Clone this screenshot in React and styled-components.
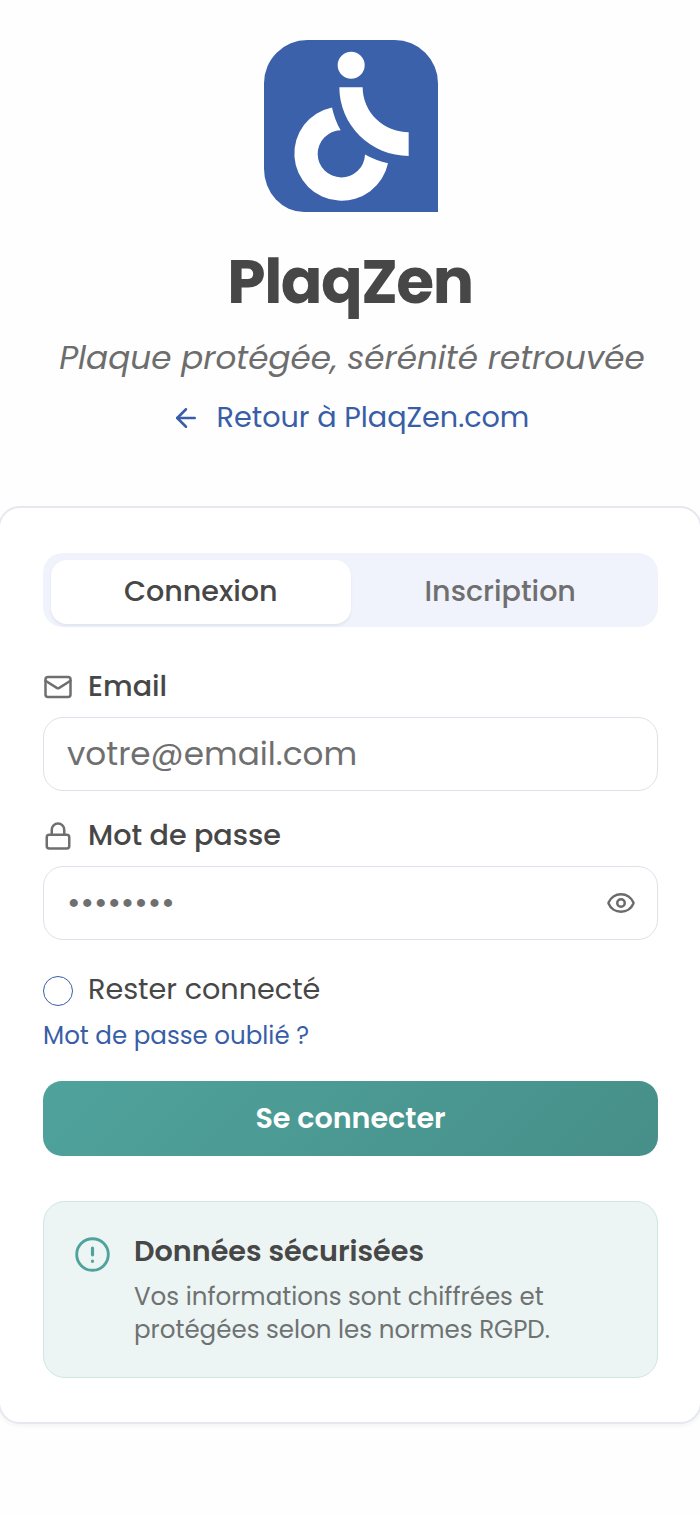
import { useState } from 'react';
import styled, { createGlobalStyle } from 'styled-components';
import { ArrowLeft, Mail, Lock, Eye } from 'lucide-react';

const GlobalStyle = createGlobalStyle`
  *, *::before, *::after {
    box-sizing: border-box;
  }
  body {
    margin: 0;
    background: #fefefe;
    overflow-x: hidden;
  }
  body, input, button {
    font-family: Poppins, Inter, "Liberation Sans", sans-serif;
  }
  h1, h2, p {
    margin: 0;
  }
`;

const Page = styled.div`
  width: 100%;
  min-height: 1515px;
  padding-top: 40px;
  overflow: hidden;
  color: #474747;
`;

const Header = styled.header`
  display: flex;
  flex-direction: column;
  align-items: center;
  padding-left: 2px;
`;

const Title = styled.h1`
  height: 84px;
  margin: 28px 2px 0 0;
  font-size: 61.4px;
  line-height: 84px;
  font-weight: 700;
  letter-spacing: -0.024em;
`;

const Tagline = styled.p`
  height: 50px;
  margin: 9px 0 0 2px;
  font-size: 32.67px;
  line-height: 50px;
  font-style: italic;
  white-space: nowrap;
  color: #6d6d6d;
`;

const BackLink = styled.a`
  display: flex;
  align-items: center;
  gap: 16px;
  height: 44px;
  margin: 12px 2px 0 0;
  font-size: 28.65px;
  white-space: nowrap;
  color: #385ea8;
  text-decoration: none;

  svg {
    margin-top: 2px;
  }
`;

const Card = styled.main`
  height: 918px;
  margin: 67px -2px 0;
  padding: 45px 42px 0 43px;
  border: 2px solid #e5e8ee;
  border-radius: 22px;
  background: #fff;
  box-shadow: 0 2px 4px rgba(30, 40, 80, 0.05);
`;

const Tabs = styled.div`
  display: grid;
  grid-template-columns: 1fr 1fr;
  height: 74px;
  padding: 7px 8px 3px 8px;
  border-radius: 20px;
  background: #f0f3fb;
`;

const Tab = styled.button`
  height: 64px;
  padding: 0 0 2px;
  border: 0;
  border-radius: 16px;
  background: ${({ $active }) => ($active ? '#fff' : 'transparent')};
  box-shadow: ${({ $active }) => ($active ? '0 2px 3px rgba(30, 40, 80, 0.07)' : 'none')};
  color: ${({ $active }) => ($active ? '#474747' : '#6f6f6f')};
  font-size: 28.58px;
  font-weight: 500;
`;

const Form = styled.form`
  display: flex;
  flex-direction: column;
`;

const Field = styled.div`
  margin-top: ${({ $first }) => ($first ? '37px' : '22px')};
`;

const Label = styled.label`
  display: flex;
  align-items: center;
  gap: 15px;
  height: 44px;
  font-size: 28.58px;
  font-weight: 500;

  svg {
    flex: none;
    margin-top: 2px;
    color: #6f6f6f;
  }
`;

const InputBox = styled.div`
  display: flex;
  align-items: center;
  height: 74px;
  margin-top: 9px;
  padding: 0 21px 0 23px;
  border: 1.5px solid #dde1e9;
  border-radius: 20px;
  background: #fff;
`;

const Input = styled.input`
  flex: 1;
  min-width: 0;
  height: 60px;
  padding: 0 0 1px;
  border: 0;
  outline: 0;
  background: transparent;
  font-size: 32.7px;
  color: #474747;

  &::placeholder {
    color: #6f6f6f;
    opacity: 1;
  }
`;

const EyeButton = styled.button`
  display: flex;
  padding: 0;
  border: 0;
  background: none;
  color: #6b6b6b;
`;

const Remember = styled.div`
  display: flex;
  align-items: center;
  gap: 15px;
  height: 44px;
  margin-top: 27px;
  font-size: 28.65px;
`;

const Radio = styled.button`
  width: 30px;
  height: 30px;
  margin-top: 3px;
  padding: 0;
  border: 1.5px solid #385ea8;
  border-radius: 50%;
  background: #fff;
`;

const Forgot = styled.a`
  align-self: flex-start;
  height: 36px;
  margin-top: 7px;
  font-size: 24.55px;
  line-height: 36px;
  color: #385ea8;
  text-decoration: none;
`;

const Submit = styled.button`
  height: 75px;
  margin-top: 27px;
  padding: 0;
  border: 0;
  border-radius: 19px;
  background: linear-gradient(135deg, #4fa39c, #478f89);
  color: #fff;
  font-size: 28.58px;
  font-weight: 600;
`;

const Notice = styled.section`
  display: flex;
  gap: 24px;
  height: 177px;
  margin-top: 45px;
  padding: 31px 30px 0 31px;
  border: 1.5px solid #cfe6e3;
  border-radius: 22px;
  background: #ecf5f4;

  svg {
    flex: none;
    margin-top: 4px;
  }
`;

const NoticeTitle = styled.h2`
  font-size: 28.65px;
  line-height: 36px;
  font-weight: 600;
`;

const NoticeText = styled.p`
  margin-top: 11px;
  font-size: 24.55px;
  line-height: 33px;
  white-space: nowrap;
  color: #6f7272;
`;

const Logo = () => (
  <svg width="174" height="172" viewBox="42 28 522 518" preserveAspectRatio="none">
    <path
      fill="#3a61a9"
      d="M172 28H434A130 130 0 0 1 564 158V546H162A120 130 0 0 1 42 416V158A130 130 0 0 1 172 28Z"
    />
    <circle cx="303.5" cy="104" r="40.5" fill="#fff" />
    <path fill="#fff" d="M268 170H338A138 136 0 0 0 476 306V377A208 207 0 0 1 268 170Z" />
    <path
      fill="#fff"
      d="M246 231A239 239 0 0 0 272 300A71 71 0 1 0 345 373A239 239 0 0 0 414 399A142 142 0 1 1 246 231Z"
    />
  </svg>
);

const AlertIcon = () => (
  <svg width="35" height="35" viewBox="0 0 35 35" fill="none" stroke="#4fa39c">
    <circle cx="17.5" cy="17.5" r="15.8" strokeWidth="2.9" />
    <path d="M17.5 11.2V17.8M17.5 24.2V24.3" strokeWidth="3.2" strokeLinecap="round" />
  </svg>
);

const App = () => {
  const [tab, setTab] = useState('login');
  const [visible, setVisible] = useState(false);

  return (
    <>
      <GlobalStyle />
      <Page>
        <Header>
          <Logo />
          <Title>PlaqZen</Title>
          <Tagline>Plaque protégée, sérénité retrouvée</Tagline>
          <BackLink href="#">
            <ArrowLeft size={30} strokeWidth={2} />
            <span>Retour à PlaqZen.com</span>
          </BackLink>
        </Header>

        <Card>
          <Tabs>
            <Tab type="button" $active={tab === 'login'} onClick={() => setTab('login')}>
              Connexion
            </Tab>
            <Tab type="button" $active={tab === 'signup'} onClick={() => setTab('signup')}>
              Inscription
            </Tab>
          </Tabs>

          <Form onSubmit={(e) => e.preventDefault()}>
            <Field $first>
              <Label htmlFor="email">
                <Mail size={30} strokeWidth={2} />
                Email
              </Label>
              <InputBox>
                <Input id="email" type="email" placeholder="votre@email.com" />
              </InputBox>
            </Field>

            <Field>
              <Label htmlFor="password">
                <Lock size={30} strokeWidth={2} />
                Mot de passe
              </Label>
              <InputBox>
                <Input
                  id="password"
                  type={visible ? 'text' : 'password'}
                  placeholder="••••••••"
                />
                <EyeButton type="button" onClick={() => setVisible(!visible)}>
                  <Eye size={30} strokeWidth={2} />
                </EyeButton>
              </InputBox>
            </Field>

            <Remember>
              <Radio type="button" />
              <span>Rester connecté</span>
            </Remember>
            <Forgot href="#">Mot de passe oublié ?</Forgot>
            <Submit type="submit">Se connecter</Submit>
          </Form>

          <Notice>
            <AlertIcon />
            <div>
              <NoticeTitle>Données sécurisées</NoticeTitle>
              <NoticeText>
                Vos informations sont chiffrées et
                <br />
                protégées selon les normes RGPD.
              </NoticeText>
            </div>
          </Notice>
        </Card>
      </Page>
    </>
  );
};

export default App;
